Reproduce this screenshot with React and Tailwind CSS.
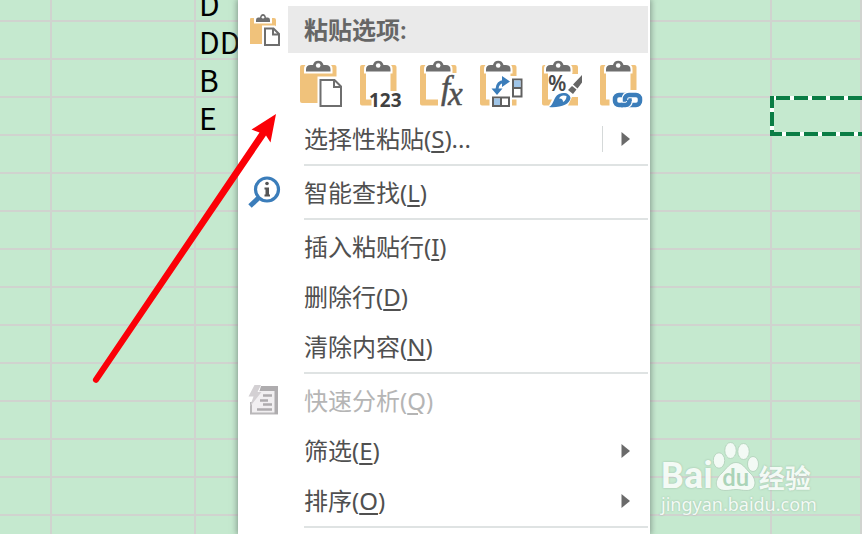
const ROWS = ["D", "DD", "B", "E", "", "", "", "", "", "", "", "", "", "", ""];
const ACTIVE_ROW = 3;

const CLIP_PATH = "M6 12.500V10.500Q6 6 10.500 6H13Q14 1.700 18.200 1.700T23.500 6H26Q30.500 6 30.500 10.500V12.500z";

const PasteSvg = ({ label, frame, children }) => (
  <svg width="48" height="50" viewBox="0 0 48 50" role="img" aria-label={label}>
    <path d={frame} fill="#f0c27b" />
    <path d={CLIP_PATH} fill="#fff" stroke="#fff" strokeWidth="4" />
    <path d={CLIP_PATH} fill="#6e6e6e" />
    <circle cx="18.200" cy="6.500" r="2.300" fill="#fff" />
    {children}
  </svg>
);

const PasteAll = () => (
  <PasteSvg label="粘贴" frame="M2 6H34.500Q36.500 6 36.500 8V44H2Q0 44 0 42V8Q0 6 2 6z">
    <path d="M17.500 17.500H37L44.500 26V50H17.500z" fill="#fff" />
    <path d="M20.500 21H34.500L41 27.500V47H20.500z" fill="#fff" stroke="#6e6e6e" strokeWidth="2" />
    <path d="M34 21V28H41" fill="none" stroke="#6e6e6e" strokeWidth="2" />
  </PasteSvg>
);

const PasteValues = () => (
  <PasteSvg label="值" frame="M2 6H34.500Q36.500 6 36.500 8V32H30.500V12H6V40.500H11.500V46.500H2Q0 46.500 0 44.500V8Q0 6 2 6z">
    <text x="9" y="48" fontFamily="Noto Sans, sans-serif" fontWeight="700" fontSize="19" fill="#404040">
      123
    </text>
  </PasteSvg>
);

const PasteFormulas = () => (
  <PasteSvg label="公式" frame="M2 6H34.500Q36.500 6 36.500 8V14H30.500V12H6V40.500H18V46.500H2Q0 46.500 0 44.500V8Q0 6 2 6z">
    <g fontFamily="Liberation Serif, serif" fontStyle="italic" fontSize="33" fill="#505050" stroke="#505050" strokeWidth="0.5">
      <text x="21" y="40">f</text>
      <text x="28" y="46">x</text>
    </g>
  </PasteSvg>
);

const PasteTranspose = () => (
  <PasteSvg
    label="转置"
    frame="M2 6H34.500Q36.500 6 36.500 8V17H30.500V12H6V40.500H9.500V46.500H2Q0 46.500 0 44.500V8Q0 6 2 6zM32 40.500H36.500V46.500H32z"
  >
    <path d="M17 30Q17.500 23 24 22.500" fill="none" stroke="#3b7dba" strokeWidth="3" />
    <path d="M11.500 29.500H22.500L17 36zM22 17L30 22.500L22 28z" fill="#3b7dba" />
    <rect x="33" y="20.500" width="8.500" height="17" fill="#fff" stroke="#606060" strokeWidth="2" />
    <path d="M34 21.500H40.500V28H34z" fill="#9fc5e8" />
    <path d="M33 29H41.500" stroke="#606060" strokeWidth="2" />
    <rect x="13" y="38.500" width="16" height="8.500" fill="#fff" stroke="#606060" strokeWidth="2" />
    <path d="M14 39.500H20V46H14z" fill="#9fc5e8" />
    <path d="M21 38.500V47" stroke="#606060" strokeWidth="2" />
  </PasteSvg>
);

const PasteFormat = () => (
  <PasteSvg
    label="格式"
    frame="M4 6H36Q38 6 38 8V15H32V12H8V40.500H12L9 46.500H4Q2 46.500 2 44.500V8Q2 6 4 6zM32 38H38V46.500H28z"
  >
    <text x="8" y="32" fontFamily="Noto Sans, sans-serif" fontWeight="600" fontSize="21" fill="#484848">
      %
    </text>
    <path d="M42 14V25L34 37L26 30z" fill="#fff" />
    <path d="M42 16V23.500L37.500 29.500L33 25.500zM32 27L36.500 30.500L33 35L28 31z" fill="#666" />
    <path d="M9 48C14 46 13 38 19 35C25 32.500 30 35 30.500 39C30 45.500 20 49 9 48z" fill="#3b7dba" />
    <path d="M19 39.500Q21 35.500 26.500 37Q26.500 41 23 43Q23 39 19 39.500z" fill="#fff" />
  </PasteSvg>
);

const PasteLink = () => (
  <PasteSvg label="粘贴链接" frame="M2 6H34.500Q36.500 6 36.500 8V31H30.500V12H6V40.500H9.500V46.500H2Q0 46.500 0 44.500V8Q0 6 2 6z">
    <rect x="10.500" y="31.500" width="33.500" height="18" rx="8" fill="#fff" />
    <g fill="none" stroke="#3b7dba" strokeWidth="4.500">
      <rect x="15" y="36" width="14.500" height="10" rx="4" />
      <path d="M25 46V40Q25 36 29 36H36Q40 36 40 40V42Q40 46 36 46H29" stroke="#fff" strokeWidth="6.500" />
      <rect x="25" y="36" width="15" height="10" rx="4" />
      <path d="M23 46H25.500Q29.500 46 29.500 42" stroke="#fff" strokeWidth="6.500" />
      <path d="M21 46H25.500Q29.500 46 29.500 41" />
    </g>
  </PasteSvg>
);

const ClipboardIcon = () => (
  <svg width="34" height="34" viewBox="0 0 34 34" aria-hidden="true">
    <path d="M3 5H26Q28 5 28 7V31H2V6Q2 5 3 5z" fill="#f0c27b" />
    <path d="M6 2H24V10.500H6z" fill="#fff" />
    <path d="M8 9V7Q8 4.500 10 4.500H12Q12.500 1 15 1T18 4.500H20Q22 4.500 22 7V9z" fill="#6e6e6e" />
    <circle cx="15" cy="4.300" r="1.300" fill="#fff" />
    <path d="M14 12.500H27L34 19V34H14z" fill="#fff" />
    <path d="M17 15.500H25.500L31 21V32H17zM25 15.500V21.500H31" fill="#fff" stroke="#6e6e6e" strokeWidth="2" />
  </svg>
);

const LookupIcon = () => (
  <svg width="34" height="34" viewBox="0 0 34 34" aria-hidden="true">
    <circle cx="19" cy="13.500" r="11.500" fill="#fff" stroke="#3b7dba" strokeWidth="3.200" />
    <path d="M10.500 22L2 30" stroke="#3b7dba" strokeWidth="5" />
    <circle cx="19" cy="7.500" r="1.800" fill="#555" />
    <path d="M16.500 11.500H21V18.500H22V20.500H16.500V18.500H17.500V13.500H16.500z" fill="#555" />
  </svg>
);

const AnalysisIcon = () => (
  <svg width="34" height="34" viewBox="0 0 34 34" aria-hidden="true">
    <path d="M3 18V29.500H29V3H14" fill="#f1eff1" stroke="#bab8ba" strokeWidth="2" />
    <path d="M13 2H30V30H26.500V7H11.500z" fill="#aeacae" />
    <path d="M15 11.500H24M12 16.500H20M15 20.500H24M9 25.500H24" stroke="#aeacae" strokeWidth="2.500" />
    <path d="M6.500 1H13L9.500 8H13.500L2 22.500L5.500 12.500H0.500z" fill="#d3d0d3" />
  </svg>
);

const Triangle = () => (
  <svg width="9" height="14" viewBox="0 0 9 14" aria-hidden="true">
    <path d="M0.500 0L9 7L0.500 14z" fill="#6a6a6a" />
  </svg>
);

const MenuItem = ({ label, hotkey, suffix, icon, submenu, split, disabled }) => (
  <button
    role="menuitem"
    disabled={disabled}
    className={`flex h-[50px] w-full items-center pr-5 text-left text-2xl ${
      disabled ? "text-[#b5b5b5]" : "text-[#505050]"
    }`}
  >
    <span className="w-[66px] shrink-0 pl-[10px]">{icon}</span>
    <span>
      {label}(<span className="underline decoration-2 underline-offset-3">{hotkey}</span>){suffix}
    </span>
    {submenu && (
      <span className="ml-auto flex items-center gap-[18px]">
        {split && <span className="h-[26px] w-px bg-[#d5d9d9]" />}
        <Triangle />
      </span>
    )}
  </button>
);

const Separator = () => (
  <div role="separator" className="mr-[2px] ml-[66px] h-1 border-t-2 border-[#dfe3e3]" />
);

const ContextMenu = () => (
  <div
    role="menu"
    className="absolute top-0 left-[238px] min-h-full w-[412px] bg-white pt-[6px] shadow-[0_0_6px_1px_rgba(90,100,95,0.6)]"
  >
    <div className="flex h-[47px] items-center pr-[2px]">
      <span className="w-[50px] shrink-0 pl-[10px]">
        <ClipboardIcon />
      </span>
      <h2 className="flex h-full flex-1 items-center bg-[#eaeaea] pl-4 text-2xl font-semibold text-[#666]">
        粘贴选项:
      </h2>
    </div>
    <div className="flex h-[61px] items-center gap-3 pl-[62px]">
      <button><PasteAll /></button>
      <button><PasteValues /></button>
      <button><PasteFormulas /></button>
      <button><PasteTranspose /></button>
      <button><PasteFormat /></button>
      <button><PasteLink /></button>
    </div>
    <MenuItem label="选择性粘贴" hotkey="S" suffix="..." submenu split />
    <Separator />
    <MenuItem label="智能查找" hotkey="L" icon={<LookupIcon />} />
    <Separator />
    <MenuItem label="插入粘贴行" hotkey="I" />
    <MenuItem label="删除行" hotkey="D" />
    <MenuItem label="清除内容" hotkey="N" />
    <Separator />
    <MenuItem label="快速分析" hotkey="Q" icon={<AnalysisIcon />} disabled />
    <MenuItem label="筛选" hotkey="E" submenu />
    <MenuItem label="排序" hotkey="O" submenu />
    <Separator />
  </div>
);

// dashed border around the copied cell
const CopyOutline = () => (
  <svg className="absolute -top-[2px] -left-[2px] h-10 w-full overflow-visible" aria-hidden="true">
    <g stroke="#fff" strokeWidth="4">
      <line x1="0" y1="2" x2="110%" y2="2" />
      <line x1="0" y1="38" x2="110%" y2="38" />
      <line x1="2" y1="0" x2="2" y2="40" />
    </g>
    <g stroke="#0b7d45" strokeWidth="4" strokeDasharray="14 4">
      <line x1="6" y1="2" x2="110%" y2="2" />
      <line x1="0" y1="38" x2="110%" y2="38" strokeDashoffset="2" />
      <line x1="2" y1="0" x2="2" y2="40" strokeDashoffset="2" />
    </g>
  </svg>
);

const Sheet = () => (
  <table className="w-full table-fixed border-separate border-spacing-0">
    <colgroup>
      <col className="w-[52px]" />
      <col className="w-[144px]" />
      <col className="w-[144px]" />
      <col className="w-[144px]" />
      <col className="w-[144px]" />
      <col className="w-[144px]" />
      <col />
    </colgroup>
    <tbody>
      {ROWS.map((value, row) => (
        <tr key={row}>
          {[0, 1, 2, 3, 4, 5, 6].map((col) => (
            <td
              key={col}
              className={`relative border-r-2 border-b-2 border-[#d0d3cf] p-0 ${row === 0 ? "h-[22px]" : "h-[38px]"}`}
            >
              {col === 2 && value && (
                <div
                  className={`flex items-end pl-[3px] font-['Noto_Sans_CJK_SC',sans-serif] text-3xl leading-[34px] text-black ${
                    row === 0 ? "h-5" : "h-9"
                  }`}
                >
                  {value}
                </div>
              )}
              {col === 6 && row === ACTIVE_ROW && <CopyOutline />}
            </td>
          ))}
        </tr>
      ))}
    </tbody>
  </table>
);

const Watermark = () => (
  <div className="absolute right-12 bottom-[18px] w-[153px] whitespace-nowrap text-white opacity-80 [text-shadow:0_0_2px_#8fae9a]">
    <div className="flex h-[50px] items-end">
      <span className="font-[Roboto] text-4xl leading-8 font-bold">Bai</span>
      <span className="relative shrink-0">
        <svg width="46" height="50" viewBox="0 0 46 50" fill="#fff" stroke="#a9c9b3" strokeWidth="0.800" aria-hidden="true">
          <ellipse cx="6" cy="18.500" rx="5.700" ry="7.700" />
          <ellipse cx="17.500" cy="8.500" rx="5.700" ry="8" />
          <ellipse cx="30.500" cy="9.500" rx="5.700" ry="8" />
          <ellipse cx="40" cy="22" rx="5.500" ry="7.500" />
          <path d="M23 20.500C29 20.500 32 26 37 31C44 37 44 48 34 48.500C29 48.500 27 47.500 23 47.500S17 48.500 12 48.500C1 48 1 38 9 31C14 26 17 20.500 23 20.500z" />
        </svg>
        <span className="absolute inset-x-0 bottom-0 text-center font-[Roboto] text-2xl leading-7 font-medium text-[#a5cfb3] [text-shadow:none]">
          du
        </span>
      </span>
      <span className="text-[26px] leading-7 font-bold">经验</span>
    </div>
    <div className="text-lg leading-6">jingyan.baidu.com</div>
  </div>
);

const PointerArrow = () => (
  <svg className="absolute top-[110px] left-[90px]" width="190" height="276" viewBox="90 110 190 276" aria-hidden="true">
    <path
      d="M93.500 378L259.500 132.500L251.500 129.500L276 114L270.500 142.500L266 135.500L98.500 381.500A3 3 0 0 1 93.500 378z"
      fill="#fb0007"
    />
  </svg>
);

const App = () => {
  return (
    <main className="relative h-screen overflow-hidden bg-[#c5e9cf] font-['Noto_Sans','Noto_Sans_CJK_SC',sans-serif]">
      <Sheet />
      <ContextMenu />
      <PointerArrow />
      <Watermark />
    </main>
  );
};

export default App;
